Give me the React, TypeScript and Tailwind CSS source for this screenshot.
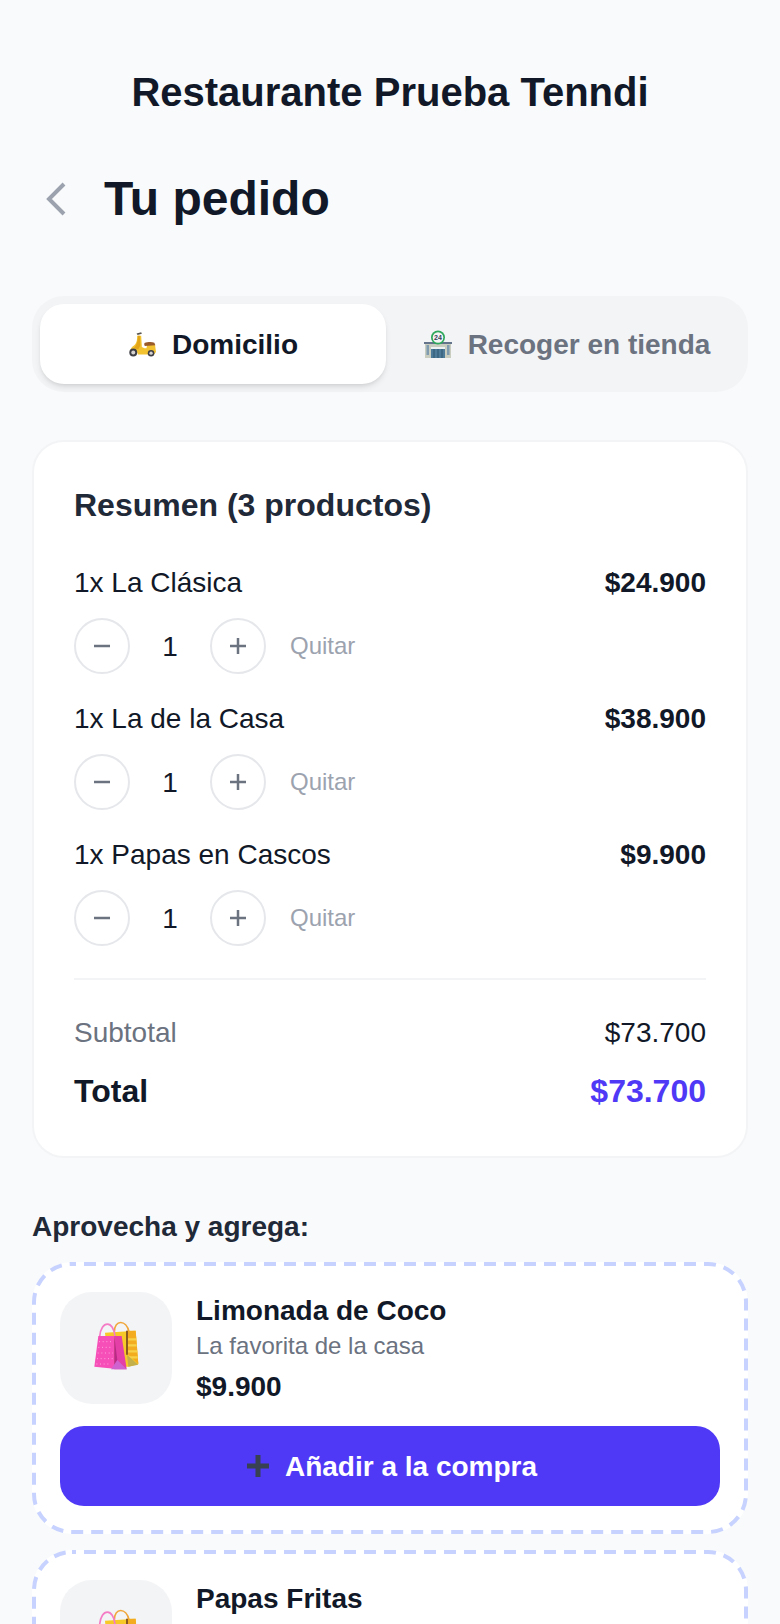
const items = [
  { name: '1x La Clásica', price: '$24.900' },
  { name: '1x La de la Casa', price: '$38.900' },
  { name: '1x Papas en Cascos', price: '$9.900' },
]

function Scooter() {
  return (
    <svg width="28" height="26" viewBox="0 0 85 78" className="shrink-0">
      <path d="M26 7l14-4 2 5-13 4z" fill="#57534e" />
      <path d="M28 14h12l2 34 8 4h6l2-10 24-1 3 22-6 8H30c-1-10-10-15-22-13 0-8 8-12 14-18 4-5 6-14 6-26z" fill="#f2c230" />
      <path d="M30 14l6 0 1 30-6 12c-4-2-9-4-14-4 8-7 13-18 13-38z" fill="#e2a517" />
      <path d="M50 36c8-3 22-4 30-1l3 8-32 2c-2-3-2-6-1-9z" fill="#9a5b2b" />
      <circle cx="16" cy="65" r="12" fill="#3f3f46" />
      <circle cx="16" cy="65" r="6" fill="#d6d3d1" />
      <circle cx="70" cy="67" r="10" fill="#3f3f46" />
      <circle cx="70" cy="67" r="5" fill="#d6d3d1" />
    </svg>
  )
}

function Store() {
  return (
    <svg width="28" height="28" viewBox="0 0 28 28" className="shrink-0">
      <rect x="1" y="12" width="26" height="16" fill="#c8cdc0" />
      <rect x="0" y="12" width="28" height="2" fill="#64748b" />
      <rect x="7" y="17" width="14" height="2" fill="#eef2f2" />
      <rect x="7" y="19" width="14" height="9" fill="#4d7a99" />
      <path d="M10 19v9M14 19v9M18 19v9" stroke="#2f5670" strokeWidth="1" />
      <rect x="2.5" y="15" width="2.5" height="10" fill="#7f9bb0" />
      <rect x="23" y="15" width="2.5" height="10" fill="#7f9bb0" />
      <circle cx="14" cy="7.5" r="7" fill="#2fa85c" />
      <circle cx="14" cy="7.5" r="5.3" fill="#f4f4f5" />
      <text x="14" y="10" textAnchor="middle" fontSize="7" fontWeight="700" fill="#33415c" fontFamily="Liberation Sans">24</text>
    </svg>
  )
}

function Bags() {
  return (
    <svg width="60" height="70" viewBox="0 0 180 210">
      <g transform="translate(-3 -9)">
        {/* yellow bag behind */}
        <path d="M88 66c0-38 36-38 44 0" fill="none" stroke="#f0a63a" strokeWidth="5" />
        <path d="M60 68l92-6 8 100-30 8H70z" fill="#f6c928" />
        <path d="M125 62l27 0 8 100-32-30z" fill="#f3ac1f" />
        <path d="M127 88h26M127 106h28M127 124h29M131 142h27" stroke="#f8d14a" strokeWidth="7" />
        <path d="M123 62h6v72h-6z" fill="#8a5a1e" />
        <path d="M126 134l34 30-30 6z" fill="#c4b04a" />
        {/* pink bag in front */}
        <path d="M44 80c4-50 42-50 46 0" fill="none" stroke="#f47cc6" strokeWidth="5" />
        <path d="M40 78h48v98l-60-6z" fill="#f64fb8" />
        <path d="M88 78h22l15 100H88z" fill="#e43fa6" />
        <path d="M88 78l9 72-9 28z" fill="#b92a86" />
        <path d="M97 150l28 28H78z" fill="#cf62cf" />
        <path d="M42 95h42M40 112h44M38 129h46M36 146h48M34 162h44" stroke="#fda4dc" strokeWidth="3" strokeDasharray="3 8" />
      </g>
    </svg>
  )
}

function Stepper() {
  return (
    <div className="flex items-center mt-[15px]">
      <button className="w-14 h-14 rounded-full border-2 border-[#e5e7eb] flex items-center justify-center">
        <svg width="16" height="16" viewBox="0 0 16 16">
          <path d="M0 8h16" stroke="#6b7280" strokeWidth="2.5" />
        </svg>
      </button>
      <span className="w-20 pt-0.5 text-center text-[28px] text-[#111827]">1</span>
      <button className="w-14 h-14 rounded-full border-2 border-[#e5e7eb] flex items-center justify-center">
        <svg width="16" height="16" viewBox="0 0 16 16">
          <path d="M8 0v16M0 8h16" stroke="#6b7280" strokeWidth="2.5" />
        </svg>
      </button>
      <span className="ml-6 text-2xl text-[#9ca3af]">Quitar</span>
    </div>
  )
}

function Upsell({ name, desc, price }: { name: string; desc?: string; price?: string }) {
  return (
    <div className="relative border-4 border-transparent rounded-[40px] bg-white px-6 pt-[26px] pb-6">
      {/* dash length of a css dashed border is too short here */}
      <svg className="absolute -inset-1 w-[calc(100%+8px)] h-[calc(100%+8px)] pointer-events-none">
        <rect
          x="2"
          y="2"
          rx="38"
          className="w-[calc(100%-4px)] h-[calc(100%-4px)]"
          fill="none"
          stroke="#c7d2fe"
          strokeWidth="4"
          strokeDasharray="12 8"
          strokeDashoffset="-12"
        />
      </svg>
      <div className="flex gap-6 h-28">
        <div className="w-28 h-28 rounded-[32px] bg-[#f3f4f6] flex items-center justify-center shrink-0">
          <Bags />
        </div>
        <div className="flex flex-col">
          <p className="text-[28px] leading-10 font-bold text-[#111827] -mt-px">{name}</p>
          {desc && <p className="text-2xl leading-[30px] text-[#6b7280]">{desc}</p>}
          {price && <p className="text-[28px] leading-10 font-bold text-[#111827] mt-1.5">{price}</p>}
        </div>
      </div>
      {price && (
        <button className="mt-[22px] w-full h-20 pl-1 rounded-3xl bg-[#4f39f6] flex items-center justify-center gap-4 text-[28px] font-bold text-white">
          <svg width="22" height="22" viewBox="0 0 22 22">
            <path d="M11 0v22M0 11h22" stroke="#374151" strokeWidth="5" />
          </svg>
          <span className="pt-0.5">Añadir a la compra</span>
        </button>
      )}
    </div>
  )
}

export default function App() {
  return (
    <div className="h-[1624px] overflow-hidden bg-[#f9fafb] font-['Liberation_Sans',Arial,sans-serif] text-[#111827]">
      <div className="px-8 pt-16">
        <h1 className="text-center text-[40px] leading-[56px] font-bold">Restaurante Prueba Tenndi</h1>

        <div className="flex items-center gap-[38px] mt-[47px]">
          <svg width="20" height="34" viewBox="0 0 20 34" className="ml-3.5">
            <path d="M18 2L3 17l15 15" fill="none" stroke="#9ca3af" strokeWidth="4" />
          </svg>
          <h2 className="text-5xl leading-[64px] font-bold">Tu pedido</h2>
        </div>

        <div className="flex gap-2 mt-[65px] p-2 rounded-[32px] bg-[#f3f4f6]">
          <button className="flex-1 h-20 rounded-3xl bg-white shadow-md flex items-center justify-center gap-4 text-[28px] font-bold">
            <Scooter />
            <span className="pt-0.5">Domicilio</span>
          </button>
          <button className="flex-1 h-20 rounded-3xl flex items-center justify-center gap-4 text-[28px] font-bold text-[#6b7280]">
            <Store />
            <span className="pt-0.5">Recoger en tienda</span>
          </button>
        </div>

        <section className="mt-12 rounded-[32px] border-2 border-[#f3f4f6] bg-white px-10 pt-[41px] pb-[43px]">
          <h3 className="text-[32px] leading-[44px] font-bold text-[#1f2937]">Resumen (3 productos)</h3>
          <div className="mt-9 flex flex-col gap-[25px]">
            {items.map((item) => (
              <div key={item.name}>
                <div className="flex justify-between text-[28px] leading-10">
                  <span>{item.name}</span>
                  <span className="font-bold">{item.price}</span>
                </div>
                <Stepper />
              </div>
            ))}
          </div>
          <div className="mt-8 pt-[33px] border-t-2 border-[#f3f4f6]">
            <div className="flex justify-between text-[28px] leading-10">
              <span className="text-[#6b7280]">Subtotal</span>
              <span>$73.700</span>
            </div>
            <div className="flex justify-between mt-4 text-[32px] leading-[44px] font-bold">
              <span>Total</span>
              <span className="text-[#4f39f6]">$73.700</span>
            </div>
          </div>
        </section>

        <p className="mt-[49px] text-[28px] leading-10 font-bold text-[#1f2937]">Aprovecha y agrega:</p>
        <div className="mt-[15px] flex flex-col gap-4">
          <Upsell name="Limonada de Coco" desc="La favorita de la casa" price="$9.900" />
          <Upsell name="Papas Fritas" />
        </div>
      </div>
    </div>
  )
}
